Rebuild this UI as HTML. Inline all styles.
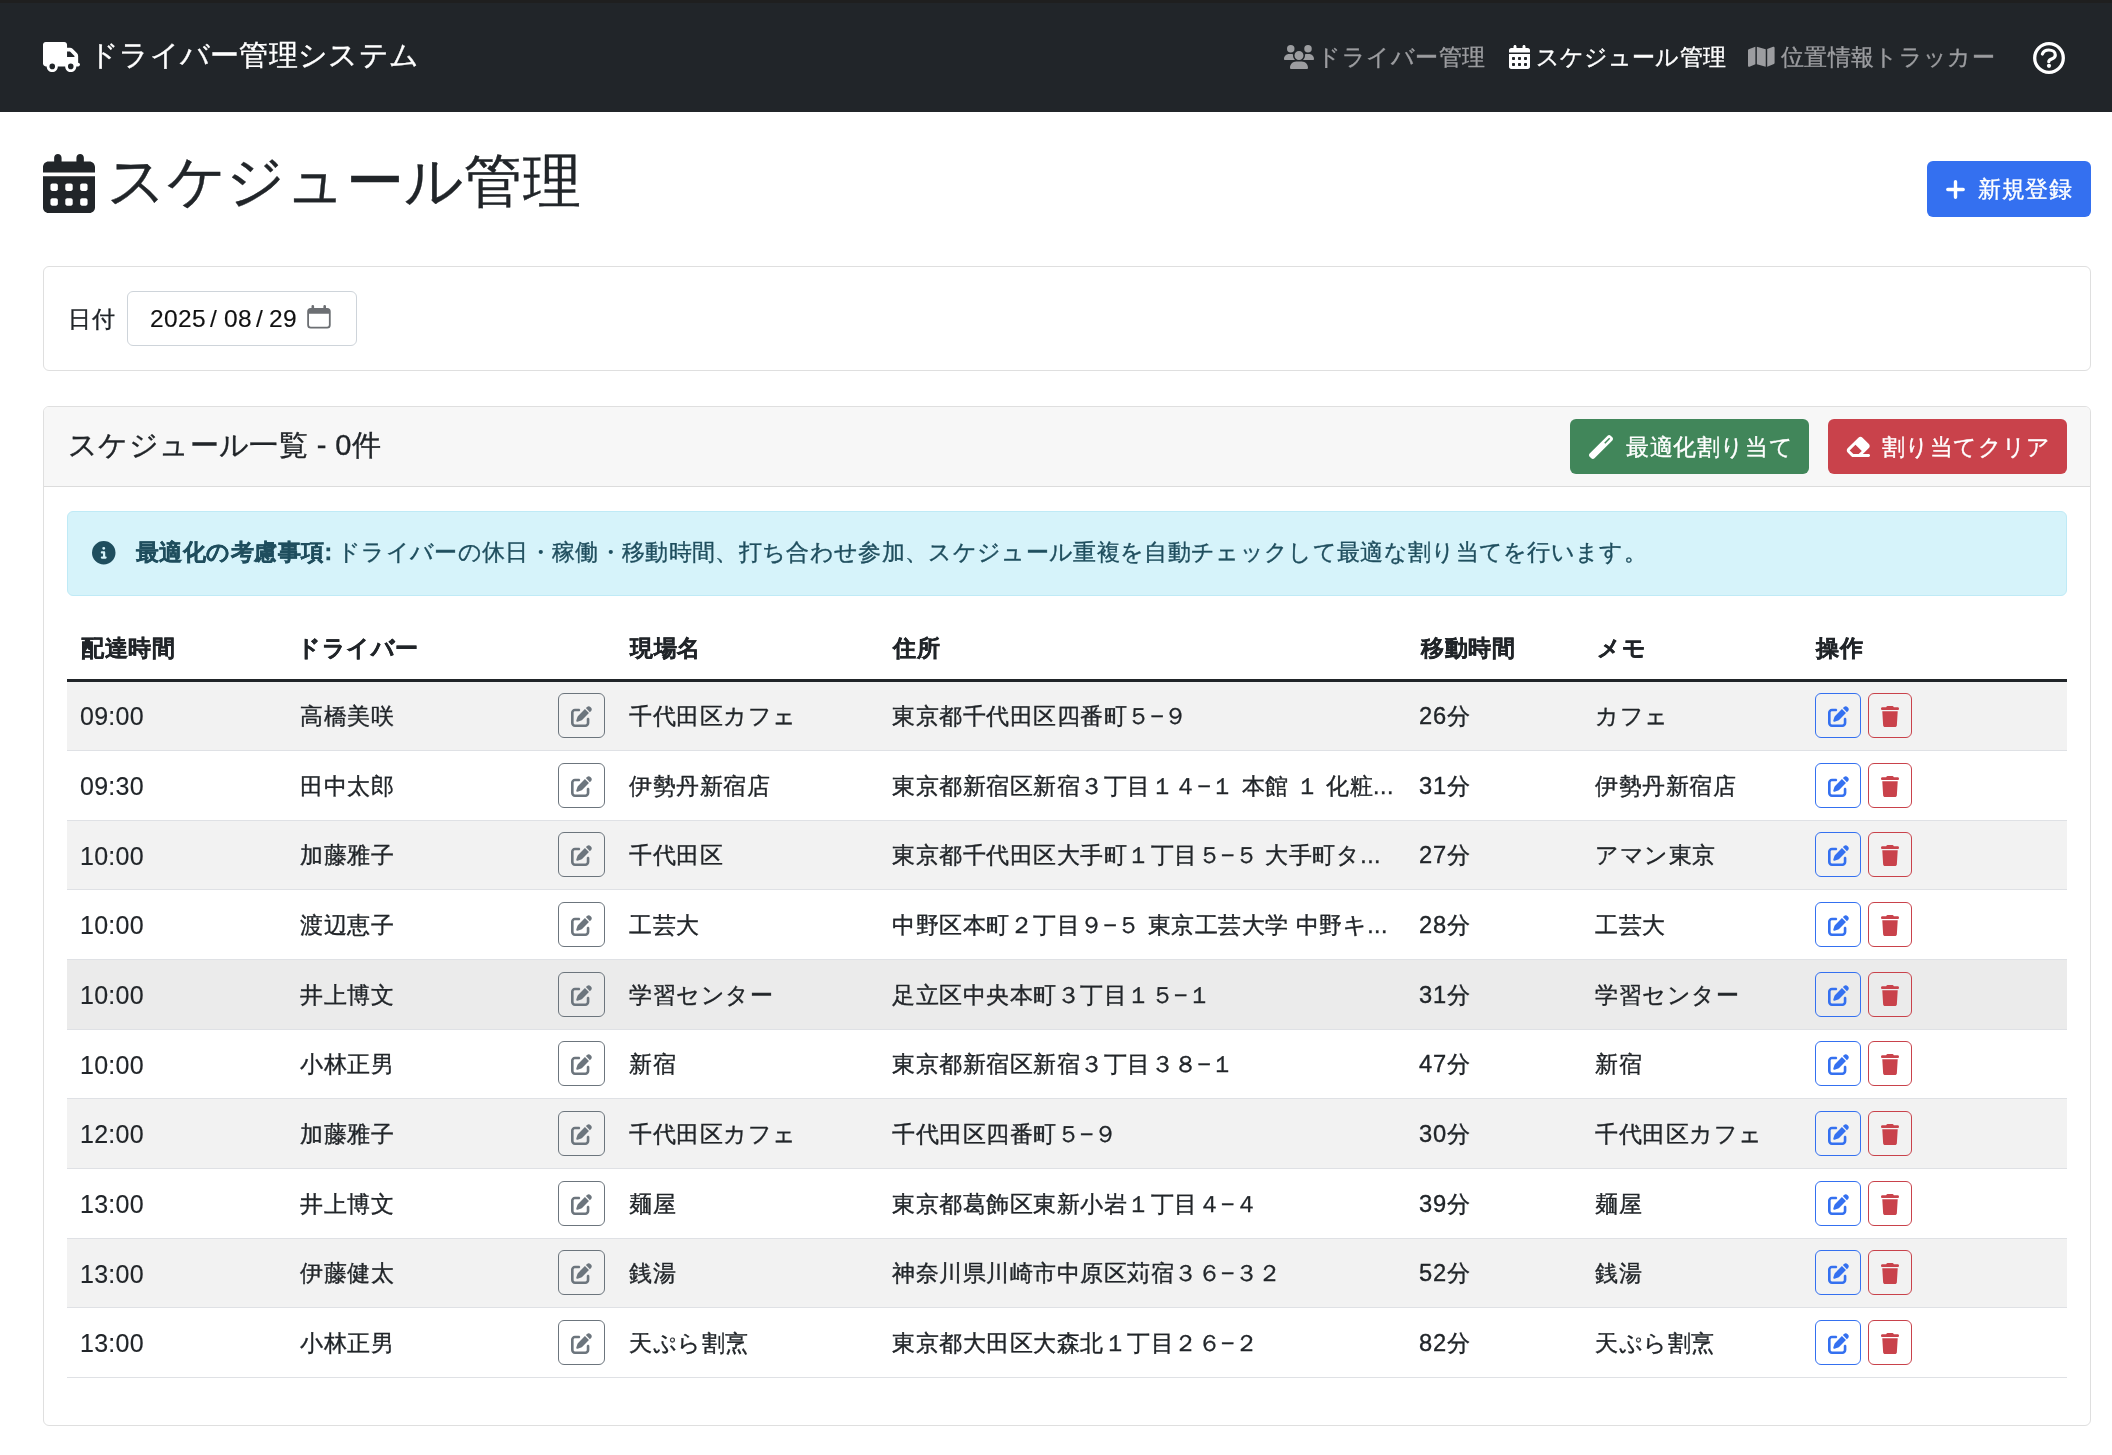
<!DOCTYPE html>
<html lang="ja">
<head>
<meta charset="utf-8">
<title>スケジュール管理</title>
<style>
html,body{margin:0;padding:0}
body{width:2112px;height:1455px;overflow:hidden;position:relative;background:#fff;font-family:"Liberation Sans",sans-serif;color:#212529;font-size:23.5px}
.a{position:absolute}
svg{display:block;overflow:visible}
.t{position:absolute;white-space:nowrap;line-height:1;-webkit-text-stroke:0.35px currentColor;will-change:transform}
.n{-webkit-text-stroke:0}
</style>
</head>
<body>
<div class="a" style="left:0px;top:0px;width:2112px;height:112px;box-sizing:border-box;background:#212529"></div>
<div class="a" style="left:0px;top:0px;width:2112px;height:3px;box-sizing:border-box;background:#1f1f1f"></div>
<svg class="a" style="left:43px;top:42px" width="37" height="30" viewBox="0 0 640 512" preserveAspectRatio="none"><path fill="#fff" d="M48 0C21.5 0 0 21.5 0 48V368c0 26.5 21.5 48 48 48H64c0 53 43 96 96 96s96-43 96-96H384c0 53 43 96 96 96s96-43 96-96h32c17.7 0 32-14.3 32-32s-14.3-32-32-32V288 256 237.3c0-17-6.7-33.3-18.7-45.3L512 114.7c-12-12-28.3-18.7-45.3-18.7H416V48c0-26.5-21.5-48-48-48H48zM416 160h50.7L544 237.3V256H416V160zM112 416a48 48 0 1 1 96 0 48 48 0 1 1 -96 0zm368-48a48 48 0 1 1 0 96 48 48 0 1 1 0-96z"/></svg>
<div class="t" style="left:89px;top:41px;font-size:29px;color:#fff;letter-spacing:0.3px">ドライバー管理システム</div>
<svg class="a" style="left:1284px;top:45px" width="30" height="24" viewBox="0 0 640 512" preserveAspectRatio="none"><path fill="#9c9da0" d="M144 0a80 80 0 1 1 0 160A80 80 0 1 1 144 0zM512 0a80 80 0 1 1 0 160A80 80 0 1 1 512 0zM0 298.7C0 239.8 47.8 192 106.7 192h42.7c15.9 0 31 3.5 44.6 9.7c-1.3 7.2-1.9 14.7-1.9 22.3c0 38.2 16.8 72.5 43.3 96c-.2 0-.4 0-.7 0H21.3C9.6 320 0 310.4 0 298.7zM405.3 320c-.2 0-.4 0-.7 0c26.6-23.5 43.3-57.8 43.3-96c0-7.6-.7-15-1.9-22.3c13.6-6.3 28.7-9.7 44.6-9.7h42.7C592.2 192 640 239.8 640 298.7c0 11.8-9.6 21.3-21.3 21.3H405.3zM224 224a96 96 0 1 1 192 0 96 96 0 1 1 -192 0zM128 485.3C128 411.7 187.7 352 261.3 352H378.7C452.3 352 512 411.7 512 485.3c0 14.7-11.9 26.7-26.7 26.7H154.7c-14.7 0-26.7-11.9-26.7-26.7z"/></svg>
<div class="t" style="left:1317px;top:45.5px;font-size:23px;color:#9c9da0;letter-spacing:0.5px">ドライバー管理</div>
<svg class="a" style="left:1509px;top:45px" width="21" height="24" viewBox="0 0 448 512" preserveAspectRatio="none"><path fill="#fff" d="M128 0c17.7 0 32 14.3 32 32V64H288V32c0-17.7 14.3-32 32-32s32 14.3 32 32V64h48c26.5 0 48 21.5 48 48v48H0V112C0 85.5 21.5 64 48 64H96V32c0-17.7 14.3-32 32-32zM0 192H448V464c0 26.5-21.5 48-48 48H48c-26.5 0-48-21.5-48-48V192zm80 64c-8.8 0-16 7.2-16 16v32c0 8.8 7.2 16 16 16h32c8.8 0 16-7.2 16-16V272c0-8.8-7.2-16-16-16H80zm128 0c-8.8 0-16 7.2-16 16v32c0 8.8 7.2 16 16 16h32c8.8 0 16-7.2 16-16V272c0-8.8-7.2-16-16-16H208zm112 16v32c0 8.8 7.2 16 16 16h32c8.8 0 16-7.2 16-16V272c0-8.8-7.2-16-16-16H336c-8.8 0-16 7.2-16 16zM80 384c-8.8 0-16 7.2-16 16v32c0 8.8 7.2 16 16 16h32c8.8 0 16-7.2 16-16V400c0-8.8-7.2-16-16-16H80zm112 16v32c0 8.8 7.2 16 16 16h32c8.8 0 16-7.2 16-16V400c0-8.8-7.2-16-16-16H208c-8.8 0-16 7.2-16 16zm144-16c-8.8 0-16 7.2-16 16v32c0 8.8 7.2 16 16 16h32c8.8 0 16-7.2 16-16V400c0-8.8-7.2-16-16-16H336z"/></svg>
<div class="t" style="left:1536px;top:46px;font-size:23px;color:#fff;letter-spacing:0.1px">スケジュール管理</div>
<svg class="a" style="left:1748px;top:45.4px" width="26.6" height="23.4" viewBox="0 0 576 512" preserveAspectRatio="none"><path fill="#9c9da0" d="M384 476.1L192 421.2V35.9L384 90.8V476.1zm32-1.2V88.4L543.1 37.5c15.8-6.3 32.9 5.3 32.9 22.3V394.6c0 9.8-6 18.6-15.1 22.3L416 474.8zM15.1 95.1L160 37.2V423.6L32.9 474.5C17.1 480.8 0 469.2 0 452.2V117.4c0-9.8 6-18.6 15.1-22.3z"/></svg>
<div class="t" style="left:1781px;top:45.5px;font-size:23px;color:#9c9da0;letter-spacing:0.35px">位置情報トラッカー</div>
<svg class="a" style="left:2033px;top:42px" width="32" height="32" viewBox="0 0 32 32"><circle cx="16" cy="16" r="14.3" fill="none" stroke="#fff" stroke-width="3.3"/><path d="M9.4 12C10.3 9.4 12.8 8 15.8 8C19.4 8 22.3 10.1 22.3 12.9C22.3 15.2 20.7 16.2 18.6 17C16.9 17.7 15.8 18.4 15.8 19.6V19.7" fill="none" stroke="#fff" stroke-width="3.2" stroke-linecap="round"/><circle cx="16" cy="23.8" r="2.1" fill="#fff"/></svg>
<svg class="a" style="left:43px;top:154px" width="52" height="59" viewBox="0 0 448 512" preserveAspectRatio="none"><path fill="#212529" d="M128 0c17.7 0 32 14.3 32 32V64H288V32c0-17.7 14.3-32 32-32s32 14.3 32 32V64h48c26.5 0 48 21.5 48 48v48H0V112C0 85.5 21.5 64 48 64H96V32c0-17.7 14.3-32 32-32zM0 192H448V464c0 26.5-21.5 48-48 48H48c-26.5 0-48-21.5-48-48V192zm80 64c-8.8 0-16 7.2-16 16v32c0 8.8 7.2 16 16 16h32c8.8 0 16-7.2 16-16V272c0-8.8-7.2-16-16-16H80zm128 0c-8.8 0-16 7.2-16 16v32c0 8.8 7.2 16 16 16h32c8.8 0 16-7.2 16-16V272c0-8.8-7.2-16-16-16H208zm112 16v32c0 8.8 7.2 16 16 16h32c8.8 0 16-7.2 16-16V272c0-8.8-7.2-16-16-16H336c-8.8 0-16 7.2-16 16zM80 384c-8.8 0-16 7.2-16 16v32c0 8.8 7.2 16 16 16h32c8.8 0 16-7.2 16-16V400c0-8.8-7.2-16-16-16H80zm112 16v32c0 8.8 7.2 16 16 16h32c8.8 0 16-7.2 16-16V400c0-8.8-7.2-16-16-16H208c-8.8 0-16 7.2-16 16zm144-16c-8.8 0-16 7.2-16 16v32c0 8.8 7.2 16 16 16h32c8.8 0 16-7.2 16-16V400c0-8.8-7.2-16-16-16H336z"/></svg>
<div class="t" style="left:107px;top:152px;font-size:58px;color:#212529;letter-spacing:0.65px">スケジュール管理</div>
<div class="a" style="left:1927px;top:161px;width:164px;height:56px;box-sizing:border-box;background:#3470f0;border-radius:6px"></div>
<svg class="a" style="left:1946px;top:180px" width="19" height="19" viewBox="0 0 19 19"><path d="M9.5 1.8v15.4M1.8 9.5h15.4" stroke="#fff" stroke-width="3.4" stroke-linecap="round"/></svg>
<div class="t" style="left:1978px;top:178px;font-size:23px;color:#fff;letter-spacing:0.5px">新規登録</div>
<div class="a" style="left:43px;top:266px;width:2048px;height:105px;box-sizing:border-box;border:1px solid #dfdfdf;border-radius:6px;background:#fff"></div>
<div class="t" style="left:68px;top:307.5px;font-size:23px;letter-spacing:0.5px">日付</div>
<div class="a" style="left:127px;top:291px;width:230px;height:55px;box-sizing:border-box;border:1px solid #ced4da;border-radius:6px;background:#fff"></div>
<div class="t" style="left:150px;top:307.2px;font-size:24.5px;color:#111;letter-spacing:0.4px;-webkit-text-stroke:0.15px">2025</div>
<div class="t" style="left:210px;top:307.2px;font-size:24.5px;color:#111;-webkit-text-stroke:0.15px">/</div>
<div class="t" style="left:223.5px;top:307.2px;font-size:24.5px;color:#111;letter-spacing:0.4px;-webkit-text-stroke:0.15px">08</div>
<div class="t" style="left:255.5px;top:307.2px;font-size:24.5px;color:#111;-webkit-text-stroke:0.15px">/</div>
<div class="t" style="left:269px;top:307.2px;font-size:24.5px;color:#111;letter-spacing:0.4px;-webkit-text-stroke:0.15px">29</div>
<svg class="a" style="left:307px;top:305px" width="24" height="24" viewBox="0 0 24 24"><path fill="#6c6f73" fill-rule="evenodd" d="M3.7 3H20.2A3.5 3.5 0 0 1 23.7 6.5V20A3.5 3.5 0 0 1 20.2 23.5H3.7A3.5 3.5 0 0 1 0.2 20V6.5A3.5 3.5 0 0 1 3.7 3ZM2 8.7V20A1.7 1.7 0 0 0 3.7 21.7H20.2A1.7 1.7 0 0 0 21.9 20V8.7Z"/><path fill="#6c6f73" d="M4.5 3.5V1.3A1.3 1.3 0 0 1 7.1 1.3V3.5ZM16.4 3.5V1.3A1.3 1.3 0 0 1 19 1.3V3.5Z"/></svg>
<div class="a" style="left:43px;top:406px;width:2048px;height:1020px;box-sizing:border-box;border:1px solid #dfdfdf;border-radius:6px;background:#fff;overflow:hidden"></div>
<div class="a" style="left:44px;top:407px;width:2046px;height:80px;box-sizing:border-box;background:#f7f7f7;border-bottom:1px solid #dcdcdc;border-radius:5px 5px 0 0"></div>
<div class="t" style="left:68px;top:431px;font-size:29px;color:#212529;letter-spacing:0.4px">スケジュール一覧 - 0件</div>
<div class="a" style="left:1570px;top:419px;width:239px;height:55px;box-sizing:border-box;background:#41865a;border-radius:6px"></div>
<svg class="a" style="left:1589px;top:435px" width="24" height="24" viewBox="0 0 512 512"><path fill="#fff" fill-rule="evenodd" d="M14.1 463.3c-18.7-18.7-18.7-49.1 0-67.9L395.4 14.1c18.7-18.7 49.1-18.7 67.9 0l34.6 34.6c18.7 18.7 18.7 49.1 0 67.9L116.5 497.9c-18.7 18.7-49.1 18.7-67.9 0L14.1 463.3zM347.6 187.6l105-105L429.4 59.3l-105 105 23.3 23.3z"/></svg>
<div class="t" style="left:1625.5px;top:435.5px;font-size:23px;color:#fff;letter-spacing:0.6px">最適化割り当て</div>
<div class="a" style="left:1828px;top:419px;width:239px;height:55px;box-sizing:border-box;background:#c9424b;border-radius:6px"></div>
<svg class="a" style="left:1845.2px;top:435px" width="26.5" height="23.5" viewBox="0 0 576 512" preserveAspectRatio="none"><path fill="#fff" d="M290.7 57.4L57.4 290.7c-25 25-25 65.5 0 90.5l80 80c12 12 28.3 18.7 45.3 18.7H288h9.4H512c17.7 0 32-14.3 32-32s-14.3-32-32-32H387.9L518.6 285.3c25-25 25-65.5 0-90.5L381.3 57.4c-25-25-65.5-25-90.5 0zM297.4 416H288l-105.4 0-80-80L227.3 211.3 364.7 348.7 297.4 416z"/></svg>
<div class="t" style="left:1882px;top:435.5px;font-size:23px;color:#fff;letter-spacing:0.4px">割り当てクリア</div>
<div class="a" style="left:67px;top:511px;width:2000px;height:85px;box-sizing:border-box;background:#d6f3fa;border:1px solid #bfeaf6;border-radius:6px"></div>
<svg class="a" style="left:92px;top:541px" width="23.5" height="23.5" viewBox="0 0 512 512" preserveAspectRatio="none"><path fill="#1f4e5e" d="M256 512A256 256 0 1 0 256 0a256 256 0 1 0 0 512zM216 336h24V272H216c-13.3 0-24-10.7-24-24s10.7-24 24-24h48c13.3 0 24 10.7 24 24v88h8c13.3 0 24 10.7 24 24s-10.7 24-24 24H216c-13.3 0-24-10.7-24-24s10.7-24 24-24zm40-208a32 32 0 1 1 0 64 32 32 0 1 1 0-64z"/></svg>
<div class="t" style="left:136px;top:540.7px;font-size:23px;color:#1f4e5e;letter-spacing:0.45px"><b>最適化の考慮事項:</b></div>
<div class="t" style="left:337px;top:540.7px;font-size:23px;color:#1f4e5e;letter-spacing:0.33px">ドライバーの休日・稼働・移動時間、打ち合わせ参加、スケジュール重複を自動チェックして最適な割り当てを行います。</div>
<div class="t" style="left:80.5px;top:637.4px;font-size:23px;color:#212529;font-weight:bold;letter-spacing:0.5px">配達時間</div>
<div class="t" style="left:297.2px;top:637.4px;font-size:23px;color:#212529;font-weight:bold;letter-spacing:0.5px">ドライバー</div>
<div class="t" style="left:629.5px;top:637.4px;font-size:23px;color:#212529;font-weight:bold;letter-spacing:0.5px">現場名</div>
<div class="t" style="left:892.5px;top:637.4px;font-size:23px;color:#212529;font-weight:bold;letter-spacing:0.5px">住所</div>
<div class="t" style="left:1420.5px;top:637.4px;font-size:23px;color:#212529;font-weight:bold;letter-spacing:0.5px">移動時間</div>
<div class="t" style="left:1596.5px;top:637.4px;font-size:23px;color:#212529;font-weight:bold;letter-spacing:0.5px">メモ</div>
<div class="t" style="left:1815.5px;top:637.4px;font-size:23px;color:#212529;font-weight:bold;letter-spacing:0.5px">操作</div>
<div class="a" style="left:67px;top:681.33px;width:2000px;height:69.67px;box-sizing:border-box;background:#f2f2f2;border-bottom:1px solid #dfe1e5"></div>
<div class="t" style="left:79.5px;top:704.33px;font-size:25px;color:#212529;letter-spacing:0.25px;-webkit-text-stroke:0.15px">09:00</div>
<div class="t" style="left:299.5px;top:704.83px;font-size:23px;color:#212529;letter-spacing:0.5px">高橋美咲</div>
<div class="t" style="left:629px;top:704.83px;font-size:23px;color:#212529;letter-spacing:0.5px">千代田区カフェ</div>
<div class="t" style="left:892px;top:704.83px;font-size:23px;color:#212529;letter-spacing:0.5px">東京都千代田区四番町５−９</div>
<div class="t" style="left:1419px;top:704.83px;font-size:23px;color:#212529;letter-spacing:0.5px"><span style="font-size:23.7px;letter-spacing:0.9px">26</span>分</div>
<div class="t" style="left:1595px;top:704.83px;font-size:23px;color:#212529;letter-spacing:0.5px">カフェ</div>
<div class="a" style="left:558px;top:693.0px;width:47px;height:45px;box-sizing:border-box;border:1px solid #6c757d;border-radius:6px"></div>
<svg class="a" style="left:571px;top:706.0px" width="21" height="21" viewBox="0 0 512 512" preserveAspectRatio="none"><path fill="#6c757d" d="M471.6 21.7c-21.9-21.9-57.3-21.9-79.2 0L362.3 51.7l97.9 97.9 30.1-30.1c21.9-21.9 21.9-57.3 0-79.2L471.6 21.7zm-299.2 220c-6.1 6.1-10.8 13.6-13.5 21.9l-29.6 88.8c-2.9 8.6-.6 18.1 5.8 24.6s15.9 8.7 24.6 5.8l88.8-29.6c8.2-2.7 15.7-7.4 21.9-13.5L437.7 172.3 339.7 74.3 172.4 241.7zM96 64C43 64 0 107 0 160V416c0 53 43 96 96 96H352c53 0 96-43 96-96V320c0-17.7-14.3-32-32-32s-32 14.3-32 32v96c0 17.7-14.3 32-32 32H96c-17.7 0-32-14.3-32-32V160c0-17.7 14.3-32 32-32h96c17.7 0 32-14.3 32-32s-14.3-32-32-32H96z"/></svg>
<div class="a" style="left:1815px;top:693.0px;width:46px;height:45px;box-sizing:border-box;border:1px solid #3470f0;border-radius:6px"></div>
<svg class="a" style="left:1828px;top:706.0px" width="21" height="21" viewBox="0 0 512 512" preserveAspectRatio="none"><path fill="#3470f0" d="M471.6 21.7c-21.9-21.9-57.3-21.9-79.2 0L362.3 51.7l97.9 97.9 30.1-30.1c21.9-21.9 21.9-57.3 0-79.2L471.6 21.7zm-299.2 220c-6.1 6.1-10.8 13.6-13.5 21.9l-29.6 88.8c-2.9 8.6-.6 18.1 5.8 24.6s15.9 8.7 24.6 5.8l88.8-29.6c8.2-2.7 15.7-7.4 21.9-13.5L437.7 172.3 339.7 74.3 172.4 241.7zM96 64C43 64 0 107 0 160V416c0 53 43 96 96 96H352c53 0 96-43 96-96V320c0-17.7-14.3-32-32-32s-32 14.3-32 32v96c0 17.7-14.3 32-32 32H96c-17.7 0-32-14.3-32-32V160c0-17.7 14.3-32 32-32h96c17.7 0 32-14.3 32-32s-14.3-32-32-32H96z"/></svg>
<div class="a" style="left:1868px;top:693.0px;width:44px;height:45px;box-sizing:border-box;border:1px solid #c9424b;border-radius:6px"></div>
<svg class="a" style="left:1881px;top:706.0px" width="18" height="21" viewBox="0 0 448 512" preserveAspectRatio="none"><path fill="#c9424b" d="M135.2 17.7L128 32H32C14.3 32 0 46.3 0 64S14.3 96 32 96H416c17.7 0 32-14.3 32-32s-14.3-32-32-32H320l-7.2-14.3C307.4 6.8 296.3 0 284.2 0H163.8c-12.1 0-23.2 6.8-28.6 17.7zM416 128H32L53.2 467c1.6 25.3 22.6 45 47.9 45H346.9c25.3 0 46.3-19.7 47.9-45L416 128z"/></svg>
<div class="a" style="left:67px;top:751.0px;width:2000px;height:69.67px;box-sizing:border-box;background:#fff;border-bottom:1px solid #dfe1e5"></div>
<div class="t" style="left:79.5px;top:774.0px;font-size:25px;color:#212529;letter-spacing:0.25px;-webkit-text-stroke:0.15px">09:30</div>
<div class="t" style="left:299.5px;top:774.5px;font-size:23px;color:#212529;letter-spacing:0.5px">田中太郎</div>
<div class="t" style="left:629px;top:774.5px;font-size:23px;color:#212529;letter-spacing:0.5px">伊勢丹新宿店</div>
<div class="t" style="left:892px;top:774.5px;font-size:23px;color:#212529;letter-spacing:0.5px">東京都新宿区新宿３丁目１４−１ 本館 １ 化粧<span class="el">...</span></div>
<div class="t" style="left:1419px;top:774.5px;font-size:23px;color:#212529;letter-spacing:0.5px"><span style="font-size:23.7px;letter-spacing:0.9px">31</span>分</div>
<div class="t" style="left:1595px;top:774.5px;font-size:23px;color:#212529;letter-spacing:0.5px">伊勢丹新宿店</div>
<div class="a" style="left:558px;top:762.67px;width:47px;height:45px;box-sizing:border-box;border:1px solid #6c757d;border-radius:6px"></div>
<svg class="a" style="left:571px;top:775.67px" width="21" height="21" viewBox="0 0 512 512" preserveAspectRatio="none"><path fill="#6c757d" d="M471.6 21.7c-21.9-21.9-57.3-21.9-79.2 0L362.3 51.7l97.9 97.9 30.1-30.1c21.9-21.9 21.9-57.3 0-79.2L471.6 21.7zm-299.2 220c-6.1 6.1-10.8 13.6-13.5 21.9l-29.6 88.8c-2.9 8.6-.6 18.1 5.8 24.6s15.9 8.7 24.6 5.8l88.8-29.6c8.2-2.7 15.7-7.4 21.9-13.5L437.7 172.3 339.7 74.3 172.4 241.7zM96 64C43 64 0 107 0 160V416c0 53 43 96 96 96H352c53 0 96-43 96-96V320c0-17.7-14.3-32-32-32s-32 14.3-32 32v96c0 17.7-14.3 32-32 32H96c-17.7 0-32-14.3-32-32V160c0-17.7 14.3-32 32-32h96c17.7 0 32-14.3 32-32s-14.3-32-32-32H96z"/></svg>
<div class="a" style="left:1815px;top:762.67px;width:46px;height:45px;box-sizing:border-box;border:1px solid #3470f0;border-radius:6px"></div>
<svg class="a" style="left:1828px;top:775.67px" width="21" height="21" viewBox="0 0 512 512" preserveAspectRatio="none"><path fill="#3470f0" d="M471.6 21.7c-21.9-21.9-57.3-21.9-79.2 0L362.3 51.7l97.9 97.9 30.1-30.1c21.9-21.9 21.9-57.3 0-79.2L471.6 21.7zm-299.2 220c-6.1 6.1-10.8 13.6-13.5 21.9l-29.6 88.8c-2.9 8.6-.6 18.1 5.8 24.6s15.9 8.7 24.6 5.8l88.8-29.6c8.2-2.7 15.7-7.4 21.9-13.5L437.7 172.3 339.7 74.3 172.4 241.7zM96 64C43 64 0 107 0 160V416c0 53 43 96 96 96H352c53 0 96-43 96-96V320c0-17.7-14.3-32-32-32s-32 14.3-32 32v96c0 17.7-14.3 32-32 32H96c-17.7 0-32-14.3-32-32V160c0-17.7 14.3-32 32-32h96c17.7 0 32-14.3 32-32s-14.3-32-32-32H96z"/></svg>
<div class="a" style="left:1868px;top:762.67px;width:44px;height:45px;box-sizing:border-box;border:1px solid #c9424b;border-radius:6px"></div>
<svg class="a" style="left:1881px;top:775.67px" width="18" height="21" viewBox="0 0 448 512" preserveAspectRatio="none"><path fill="#c9424b" d="M135.2 17.7L128 32H32C14.3 32 0 46.3 0 64S14.3 96 32 96H416c17.7 0 32-14.3 32-32s-14.3-32-32-32H320l-7.2-14.3C307.4 6.8 296.3 0 284.2 0H163.8c-12.1 0-23.2 6.8-28.6 17.7zM416 128H32L53.2 467c1.6 25.3 22.6 45 47.9 45H346.9c25.3 0 46.3-19.7 47.9-45L416 128z"/></svg>
<div class="a" style="left:67px;top:820.67px;width:2000px;height:69.67px;box-sizing:border-box;background:#f2f2f2;border-bottom:1px solid #dfe1e5"></div>
<div class="t" style="left:79.5px;top:843.67px;font-size:25px;color:#212529;letter-spacing:0.25px;-webkit-text-stroke:0.15px">10:00</div>
<div class="t" style="left:299.5px;top:844.17px;font-size:23px;color:#212529;letter-spacing:0.5px">加藤雅子</div>
<div class="t" style="left:629px;top:844.17px;font-size:23px;color:#212529;letter-spacing:0.5px">千代田区</div>
<div class="t" style="left:892px;top:844.17px;font-size:23px;color:#212529;letter-spacing:0.5px">東京都千代田区大手町１丁目５−５ 大手町タ<span class="el">...</span></div>
<div class="t" style="left:1419px;top:844.17px;font-size:23px;color:#212529;letter-spacing:0.5px"><span style="font-size:23.7px;letter-spacing:0.9px">27</span>分</div>
<div class="t" style="left:1595px;top:844.17px;font-size:23px;color:#212529;letter-spacing:0.5px">アマン東京</div>
<div class="a" style="left:558px;top:832.34px;width:47px;height:45px;box-sizing:border-box;border:1px solid #6c757d;border-radius:6px"></div>
<svg class="a" style="left:571px;top:845.34px" width="21" height="21" viewBox="0 0 512 512" preserveAspectRatio="none"><path fill="#6c757d" d="M471.6 21.7c-21.9-21.9-57.3-21.9-79.2 0L362.3 51.7l97.9 97.9 30.1-30.1c21.9-21.9 21.9-57.3 0-79.2L471.6 21.7zm-299.2 220c-6.1 6.1-10.8 13.6-13.5 21.9l-29.6 88.8c-2.9 8.6-.6 18.1 5.8 24.6s15.9 8.7 24.6 5.8l88.8-29.6c8.2-2.7 15.7-7.4 21.9-13.5L437.7 172.3 339.7 74.3 172.4 241.7zM96 64C43 64 0 107 0 160V416c0 53 43 96 96 96H352c53 0 96-43 96-96V320c0-17.7-14.3-32-32-32s-32 14.3-32 32v96c0 17.7-14.3 32-32 32H96c-17.7 0-32-14.3-32-32V160c0-17.7 14.3-32 32-32h96c17.7 0 32-14.3 32-32s-14.3-32-32-32H96z"/></svg>
<div class="a" style="left:1815px;top:832.34px;width:46px;height:45px;box-sizing:border-box;border:1px solid #3470f0;border-radius:6px"></div>
<svg class="a" style="left:1828px;top:845.34px" width="21" height="21" viewBox="0 0 512 512" preserveAspectRatio="none"><path fill="#3470f0" d="M471.6 21.7c-21.9-21.9-57.3-21.9-79.2 0L362.3 51.7l97.9 97.9 30.1-30.1c21.9-21.9 21.9-57.3 0-79.2L471.6 21.7zm-299.2 220c-6.1 6.1-10.8 13.6-13.5 21.9l-29.6 88.8c-2.9 8.6-.6 18.1 5.8 24.6s15.9 8.7 24.6 5.8l88.8-29.6c8.2-2.7 15.7-7.4 21.9-13.5L437.7 172.3 339.7 74.3 172.4 241.7zM96 64C43 64 0 107 0 160V416c0 53 43 96 96 96H352c53 0 96-43 96-96V320c0-17.7-14.3-32-32-32s-32 14.3-32 32v96c0 17.7-14.3 32-32 32H96c-17.7 0-32-14.3-32-32V160c0-17.7 14.3-32 32-32h96c17.7 0 32-14.3 32-32s-14.3-32-32-32H96z"/></svg>
<div class="a" style="left:1868px;top:832.34px;width:44px;height:45px;box-sizing:border-box;border:1px solid #c9424b;border-radius:6px"></div>
<svg class="a" style="left:1881px;top:845.34px" width="18" height="21" viewBox="0 0 448 512" preserveAspectRatio="none"><path fill="#c9424b" d="M135.2 17.7L128 32H32C14.3 32 0 46.3 0 64S14.3 96 32 96H416c17.7 0 32-14.3 32-32s-14.3-32-32-32H320l-7.2-14.3C307.4 6.8 296.3 0 284.2 0H163.8c-12.1 0-23.2 6.8-28.6 17.7zM416 128H32L53.2 467c1.6 25.3 22.6 45 47.9 45H346.9c25.3 0 46.3-19.7 47.9-45L416 128z"/></svg>
<div class="a" style="left:67px;top:890.34px;width:2000px;height:69.67px;box-sizing:border-box;background:#fff;border-bottom:1px solid #dfe1e5"></div>
<div class="t" style="left:79.5px;top:913.34px;font-size:25px;color:#212529;letter-spacing:0.25px;-webkit-text-stroke:0.15px">10:00</div>
<div class="t" style="left:299.5px;top:913.84px;font-size:23px;color:#212529;letter-spacing:0.5px">渡辺恵子</div>
<div class="t" style="left:629px;top:913.84px;font-size:23px;color:#212529;letter-spacing:0.5px">工芸大</div>
<div class="t" style="left:892px;top:913.84px;font-size:23px;color:#212529;letter-spacing:0.5px">中野区本町２丁目９−５ 東京工芸大学 中野キ<span class="el">...</span></div>
<div class="t" style="left:1419px;top:913.84px;font-size:23px;color:#212529;letter-spacing:0.5px"><span style="font-size:23.7px;letter-spacing:0.9px">28</span>分</div>
<div class="t" style="left:1595px;top:913.84px;font-size:23px;color:#212529;letter-spacing:0.5px">工芸大</div>
<div class="a" style="left:558px;top:902.01px;width:47px;height:45px;box-sizing:border-box;border:1px solid #6c757d;border-radius:6px"></div>
<svg class="a" style="left:571px;top:915.01px" width="21" height="21" viewBox="0 0 512 512" preserveAspectRatio="none"><path fill="#6c757d" d="M471.6 21.7c-21.9-21.9-57.3-21.9-79.2 0L362.3 51.7l97.9 97.9 30.1-30.1c21.9-21.9 21.9-57.3 0-79.2L471.6 21.7zm-299.2 220c-6.1 6.1-10.8 13.6-13.5 21.9l-29.6 88.8c-2.9 8.6-.6 18.1 5.8 24.6s15.9 8.7 24.6 5.8l88.8-29.6c8.2-2.7 15.7-7.4 21.9-13.5L437.7 172.3 339.7 74.3 172.4 241.7zM96 64C43 64 0 107 0 160V416c0 53 43 96 96 96H352c53 0 96-43 96-96V320c0-17.7-14.3-32-32-32s-32 14.3-32 32v96c0 17.7-14.3 32-32 32H96c-17.7 0-32-14.3-32-32V160c0-17.7 14.3-32 32-32h96c17.7 0 32-14.3 32-32s-14.3-32-32-32H96z"/></svg>
<div class="a" style="left:1815px;top:902.01px;width:46px;height:45px;box-sizing:border-box;border:1px solid #3470f0;border-radius:6px"></div>
<svg class="a" style="left:1828px;top:915.01px" width="21" height="21" viewBox="0 0 512 512" preserveAspectRatio="none"><path fill="#3470f0" d="M471.6 21.7c-21.9-21.9-57.3-21.9-79.2 0L362.3 51.7l97.9 97.9 30.1-30.1c21.9-21.9 21.9-57.3 0-79.2L471.6 21.7zm-299.2 220c-6.1 6.1-10.8 13.6-13.5 21.9l-29.6 88.8c-2.9 8.6-.6 18.1 5.8 24.6s15.9 8.7 24.6 5.8l88.8-29.6c8.2-2.7 15.7-7.4 21.9-13.5L437.7 172.3 339.7 74.3 172.4 241.7zM96 64C43 64 0 107 0 160V416c0 53 43 96 96 96H352c53 0 96-43 96-96V320c0-17.7-14.3-32-32-32s-32 14.3-32 32v96c0 17.7-14.3 32-32 32H96c-17.7 0-32-14.3-32-32V160c0-17.7 14.3-32 32-32h96c17.7 0 32-14.3 32-32s-14.3-32-32-32H96z"/></svg>
<div class="a" style="left:1868px;top:902.01px;width:44px;height:45px;box-sizing:border-box;border:1px solid #c9424b;border-radius:6px"></div>
<svg class="a" style="left:1881px;top:915.01px" width="18" height="21" viewBox="0 0 448 512" preserveAspectRatio="none"><path fill="#c9424b" d="M135.2 17.7L128 32H32C14.3 32 0 46.3 0 64S14.3 96 32 96H416c17.7 0 32-14.3 32-32s-14.3-32-32-32H320l-7.2-14.3C307.4 6.8 296.3 0 284.2 0H163.8c-12.1 0-23.2 6.8-28.6 17.7zM416 128H32L53.2 467c1.6 25.3 22.6 45 47.9 45H346.9c25.3 0 46.3-19.7 47.9-45L416 128z"/></svg>
<div class="a" style="left:67px;top:960.01px;width:2000px;height:69.67px;box-sizing:border-box;background:#ebebeb;border-bottom:1px solid #dfe1e5"></div>
<div class="t" style="left:79.5px;top:983.01px;font-size:25px;color:#212529;letter-spacing:0.25px;-webkit-text-stroke:0.15px">10:00</div>
<div class="t" style="left:299.5px;top:983.51px;font-size:23px;color:#212529;letter-spacing:0.5px">井上博文</div>
<div class="t" style="left:629px;top:983.51px;font-size:23px;color:#212529;letter-spacing:0.5px">学習センター</div>
<div class="t" style="left:892px;top:983.51px;font-size:23px;color:#212529;letter-spacing:0.5px">足立区中央本町３丁目１５−１</div>
<div class="t" style="left:1419px;top:983.51px;font-size:23px;color:#212529;letter-spacing:0.5px"><span style="font-size:23.7px;letter-spacing:0.9px">31</span>分</div>
<div class="t" style="left:1595px;top:983.51px;font-size:23px;color:#212529;letter-spacing:0.5px">学習センター</div>
<div class="a" style="left:558px;top:971.68px;width:47px;height:45px;box-sizing:border-box;border:1px solid #6c757d;border-radius:6px"></div>
<svg class="a" style="left:571px;top:984.68px" width="21" height="21" viewBox="0 0 512 512" preserveAspectRatio="none"><path fill="#6c757d" d="M471.6 21.7c-21.9-21.9-57.3-21.9-79.2 0L362.3 51.7l97.9 97.9 30.1-30.1c21.9-21.9 21.9-57.3 0-79.2L471.6 21.7zm-299.2 220c-6.1 6.1-10.8 13.6-13.5 21.9l-29.6 88.8c-2.9 8.6-.6 18.1 5.8 24.6s15.9 8.7 24.6 5.8l88.8-29.6c8.2-2.7 15.7-7.4 21.9-13.5L437.7 172.3 339.7 74.3 172.4 241.7zM96 64C43 64 0 107 0 160V416c0 53 43 96 96 96H352c53 0 96-43 96-96V320c0-17.7-14.3-32-32-32s-32 14.3-32 32v96c0 17.7-14.3 32-32 32H96c-17.7 0-32-14.3-32-32V160c0-17.7 14.3-32 32-32h96c17.7 0 32-14.3 32-32s-14.3-32-32-32H96z"/></svg>
<div class="a" style="left:1815px;top:971.68px;width:46px;height:45px;box-sizing:border-box;border:1px solid #3470f0;border-radius:6px"></div>
<svg class="a" style="left:1828px;top:984.68px" width="21" height="21" viewBox="0 0 512 512" preserveAspectRatio="none"><path fill="#3470f0" d="M471.6 21.7c-21.9-21.9-57.3-21.9-79.2 0L362.3 51.7l97.9 97.9 30.1-30.1c21.9-21.9 21.9-57.3 0-79.2L471.6 21.7zm-299.2 220c-6.1 6.1-10.8 13.6-13.5 21.9l-29.6 88.8c-2.9 8.6-.6 18.1 5.8 24.6s15.9 8.7 24.6 5.8l88.8-29.6c8.2-2.7 15.7-7.4 21.9-13.5L437.7 172.3 339.7 74.3 172.4 241.7zM96 64C43 64 0 107 0 160V416c0 53 43 96 96 96H352c53 0 96-43 96-96V320c0-17.7-14.3-32-32-32s-32 14.3-32 32v96c0 17.7-14.3 32-32 32H96c-17.7 0-32-14.3-32-32V160c0-17.7 14.3-32 32-32h96c17.7 0 32-14.3 32-32s-14.3-32-32-32H96z"/></svg>
<div class="a" style="left:1868px;top:971.68px;width:44px;height:45px;box-sizing:border-box;border:1px solid #c9424b;border-radius:6px"></div>
<svg class="a" style="left:1881px;top:984.68px" width="18" height="21" viewBox="0 0 448 512" preserveAspectRatio="none"><path fill="#c9424b" d="M135.2 17.7L128 32H32C14.3 32 0 46.3 0 64S14.3 96 32 96H416c17.7 0 32-14.3 32-32s-14.3-32-32-32H320l-7.2-14.3C307.4 6.8 296.3 0 284.2 0H163.8c-12.1 0-23.2 6.8-28.6 17.7zM416 128H32L53.2 467c1.6 25.3 22.6 45 47.9 45H346.9c25.3 0 46.3-19.7 47.9-45L416 128z"/></svg>
<div class="a" style="left:67px;top:1029.68px;width:2000px;height:69.67px;box-sizing:border-box;background:#fff;border-bottom:1px solid #dfe1e5"></div>
<div class="t" style="left:79.5px;top:1052.68px;font-size:25px;color:#212529;letter-spacing:0.25px;-webkit-text-stroke:0.15px">10:00</div>
<div class="t" style="left:299.5px;top:1053.18px;font-size:23px;color:#212529;letter-spacing:0.5px">小林正男</div>
<div class="t" style="left:629px;top:1053.18px;font-size:23px;color:#212529;letter-spacing:0.5px">新宿</div>
<div class="t" style="left:892px;top:1053.18px;font-size:23px;color:#212529;letter-spacing:0.5px">東京都新宿区新宿３丁目３８−１</div>
<div class="t" style="left:1419px;top:1053.18px;font-size:23px;color:#212529;letter-spacing:0.5px"><span style="font-size:23.7px;letter-spacing:0.9px">47</span>分</div>
<div class="t" style="left:1595px;top:1053.18px;font-size:23px;color:#212529;letter-spacing:0.5px">新宿</div>
<div class="a" style="left:558px;top:1041.35px;width:47px;height:45px;box-sizing:border-box;border:1px solid #6c757d;border-radius:6px"></div>
<svg class="a" style="left:571px;top:1054.35px" width="21" height="21" viewBox="0 0 512 512" preserveAspectRatio="none"><path fill="#6c757d" d="M471.6 21.7c-21.9-21.9-57.3-21.9-79.2 0L362.3 51.7l97.9 97.9 30.1-30.1c21.9-21.9 21.9-57.3 0-79.2L471.6 21.7zm-299.2 220c-6.1 6.1-10.8 13.6-13.5 21.9l-29.6 88.8c-2.9 8.6-.6 18.1 5.8 24.6s15.9 8.7 24.6 5.8l88.8-29.6c8.2-2.7 15.7-7.4 21.9-13.5L437.7 172.3 339.7 74.3 172.4 241.7zM96 64C43 64 0 107 0 160V416c0 53 43 96 96 96H352c53 0 96-43 96-96V320c0-17.7-14.3-32-32-32s-32 14.3-32 32v96c0 17.7-14.3 32-32 32H96c-17.7 0-32-14.3-32-32V160c0-17.7 14.3-32 32-32h96c17.7 0 32-14.3 32-32s-14.3-32-32-32H96z"/></svg>
<div class="a" style="left:1815px;top:1041.35px;width:46px;height:45px;box-sizing:border-box;border:1px solid #3470f0;border-radius:6px"></div>
<svg class="a" style="left:1828px;top:1054.35px" width="21" height="21" viewBox="0 0 512 512" preserveAspectRatio="none"><path fill="#3470f0" d="M471.6 21.7c-21.9-21.9-57.3-21.9-79.2 0L362.3 51.7l97.9 97.9 30.1-30.1c21.9-21.9 21.9-57.3 0-79.2L471.6 21.7zm-299.2 220c-6.1 6.1-10.8 13.6-13.5 21.9l-29.6 88.8c-2.9 8.6-.6 18.1 5.8 24.6s15.9 8.7 24.6 5.8l88.8-29.6c8.2-2.7 15.7-7.4 21.9-13.5L437.7 172.3 339.7 74.3 172.4 241.7zM96 64C43 64 0 107 0 160V416c0 53 43 96 96 96H352c53 0 96-43 96-96V320c0-17.7-14.3-32-32-32s-32 14.3-32 32v96c0 17.7-14.3 32-32 32H96c-17.7 0-32-14.3-32-32V160c0-17.7 14.3-32 32-32h96c17.7 0 32-14.3 32-32s-14.3-32-32-32H96z"/></svg>
<div class="a" style="left:1868px;top:1041.35px;width:44px;height:45px;box-sizing:border-box;border:1px solid #c9424b;border-radius:6px"></div>
<svg class="a" style="left:1881px;top:1054.35px" width="18" height="21" viewBox="0 0 448 512" preserveAspectRatio="none"><path fill="#c9424b" d="M135.2 17.7L128 32H32C14.3 32 0 46.3 0 64S14.3 96 32 96H416c17.7 0 32-14.3 32-32s-14.3-32-32-32H320l-7.2-14.3C307.4 6.8 296.3 0 284.2 0H163.8c-12.1 0-23.2 6.8-28.6 17.7zM416 128H32L53.2 467c1.6 25.3 22.6 45 47.9 45H346.9c25.3 0 46.3-19.7 47.9-45L416 128z"/></svg>
<div class="a" style="left:67px;top:1099.35px;width:2000px;height:69.67px;box-sizing:border-box;background:#f2f2f2;border-bottom:1px solid #dfe1e5"></div>
<div class="t" style="left:79.5px;top:1122.35px;font-size:25px;color:#212529;letter-spacing:0.25px;-webkit-text-stroke:0.15px">12:00</div>
<div class="t" style="left:299.5px;top:1122.85px;font-size:23px;color:#212529;letter-spacing:0.5px">加藤雅子</div>
<div class="t" style="left:629px;top:1122.85px;font-size:23px;color:#212529;letter-spacing:0.5px">千代田区カフェ</div>
<div class="t" style="left:892px;top:1122.85px;font-size:23px;color:#212529;letter-spacing:0.5px">千代田区四番町５−９</div>
<div class="t" style="left:1419px;top:1122.85px;font-size:23px;color:#212529;letter-spacing:0.5px"><span style="font-size:23.7px;letter-spacing:0.9px">30</span>分</div>
<div class="t" style="left:1595px;top:1122.85px;font-size:23px;color:#212529;letter-spacing:0.5px">千代田区カフェ</div>
<div class="a" style="left:558px;top:1111.02px;width:47px;height:45px;box-sizing:border-box;border:1px solid #6c757d;border-radius:6px"></div>
<svg class="a" style="left:571px;top:1124.02px" width="21" height="21" viewBox="0 0 512 512" preserveAspectRatio="none"><path fill="#6c757d" d="M471.6 21.7c-21.9-21.9-57.3-21.9-79.2 0L362.3 51.7l97.9 97.9 30.1-30.1c21.9-21.9 21.9-57.3 0-79.2L471.6 21.7zm-299.2 220c-6.1 6.1-10.8 13.6-13.5 21.9l-29.6 88.8c-2.9 8.6-.6 18.1 5.8 24.6s15.9 8.7 24.6 5.8l88.8-29.6c8.2-2.7 15.7-7.4 21.9-13.5L437.7 172.3 339.7 74.3 172.4 241.7zM96 64C43 64 0 107 0 160V416c0 53 43 96 96 96H352c53 0 96-43 96-96V320c0-17.7-14.3-32-32-32s-32 14.3-32 32v96c0 17.7-14.3 32-32 32H96c-17.7 0-32-14.3-32-32V160c0-17.7 14.3-32 32-32h96c17.7 0 32-14.3 32-32s-14.3-32-32-32H96z"/></svg>
<div class="a" style="left:1815px;top:1111.02px;width:46px;height:45px;box-sizing:border-box;border:1px solid #3470f0;border-radius:6px"></div>
<svg class="a" style="left:1828px;top:1124.02px" width="21" height="21" viewBox="0 0 512 512" preserveAspectRatio="none"><path fill="#3470f0" d="M471.6 21.7c-21.9-21.9-57.3-21.9-79.2 0L362.3 51.7l97.9 97.9 30.1-30.1c21.9-21.9 21.9-57.3 0-79.2L471.6 21.7zm-299.2 220c-6.1 6.1-10.8 13.6-13.5 21.9l-29.6 88.8c-2.9 8.6-.6 18.1 5.8 24.6s15.9 8.7 24.6 5.8l88.8-29.6c8.2-2.7 15.7-7.4 21.9-13.5L437.7 172.3 339.7 74.3 172.4 241.7zM96 64C43 64 0 107 0 160V416c0 53 43 96 96 96H352c53 0 96-43 96-96V320c0-17.7-14.3-32-32-32s-32 14.3-32 32v96c0 17.7-14.3 32-32 32H96c-17.7 0-32-14.3-32-32V160c0-17.7 14.3-32 32-32h96c17.7 0 32-14.3 32-32s-14.3-32-32-32H96z"/></svg>
<div class="a" style="left:1868px;top:1111.02px;width:44px;height:45px;box-sizing:border-box;border:1px solid #c9424b;border-radius:6px"></div>
<svg class="a" style="left:1881px;top:1124.02px" width="18" height="21" viewBox="0 0 448 512" preserveAspectRatio="none"><path fill="#c9424b" d="M135.2 17.7L128 32H32C14.3 32 0 46.3 0 64S14.3 96 32 96H416c17.7 0 32-14.3 32-32s-14.3-32-32-32H320l-7.2-14.3C307.4 6.8 296.3 0 284.2 0H163.8c-12.1 0-23.2 6.8-28.6 17.7zM416 128H32L53.2 467c1.6 25.3 22.6 45 47.9 45H346.9c25.3 0 46.3-19.7 47.9-45L416 128z"/></svg>
<div class="a" style="left:67px;top:1169.02px;width:2000px;height:69.67px;box-sizing:border-box;background:#fff;border-bottom:1px solid #dfe1e5"></div>
<div class="t" style="left:79.5px;top:1192.02px;font-size:25px;color:#212529;letter-spacing:0.25px;-webkit-text-stroke:0.15px">13:00</div>
<div class="t" style="left:299.5px;top:1192.52px;font-size:23px;color:#212529;letter-spacing:0.5px">井上博文</div>
<div class="t" style="left:629px;top:1192.52px;font-size:23px;color:#212529;letter-spacing:0.5px">麺屋</div>
<div class="t" style="left:892px;top:1192.52px;font-size:23px;color:#212529;letter-spacing:0.5px">東京都葛飾区東新小岩１丁目４−４</div>
<div class="t" style="left:1419px;top:1192.52px;font-size:23px;color:#212529;letter-spacing:0.5px"><span style="font-size:23.7px;letter-spacing:0.9px">39</span>分</div>
<div class="t" style="left:1595px;top:1192.52px;font-size:23px;color:#212529;letter-spacing:0.5px">麺屋</div>
<div class="a" style="left:558px;top:1180.69px;width:47px;height:45px;box-sizing:border-box;border:1px solid #6c757d;border-radius:6px"></div>
<svg class="a" style="left:571px;top:1193.69px" width="21" height="21" viewBox="0 0 512 512" preserveAspectRatio="none"><path fill="#6c757d" d="M471.6 21.7c-21.9-21.9-57.3-21.9-79.2 0L362.3 51.7l97.9 97.9 30.1-30.1c21.9-21.9 21.9-57.3 0-79.2L471.6 21.7zm-299.2 220c-6.1 6.1-10.8 13.6-13.5 21.9l-29.6 88.8c-2.9 8.6-.6 18.1 5.8 24.6s15.9 8.7 24.6 5.8l88.8-29.6c8.2-2.7 15.7-7.4 21.9-13.5L437.7 172.3 339.7 74.3 172.4 241.7zM96 64C43 64 0 107 0 160V416c0 53 43 96 96 96H352c53 0 96-43 96-96V320c0-17.7-14.3-32-32-32s-32 14.3-32 32v96c0 17.7-14.3 32-32 32H96c-17.7 0-32-14.3-32-32V160c0-17.7 14.3-32 32-32h96c17.7 0 32-14.3 32-32s-14.3-32-32-32H96z"/></svg>
<div class="a" style="left:1815px;top:1180.69px;width:46px;height:45px;box-sizing:border-box;border:1px solid #3470f0;border-radius:6px"></div>
<svg class="a" style="left:1828px;top:1193.69px" width="21" height="21" viewBox="0 0 512 512" preserveAspectRatio="none"><path fill="#3470f0" d="M471.6 21.7c-21.9-21.9-57.3-21.9-79.2 0L362.3 51.7l97.9 97.9 30.1-30.1c21.9-21.9 21.9-57.3 0-79.2L471.6 21.7zm-299.2 220c-6.1 6.1-10.8 13.6-13.5 21.9l-29.6 88.8c-2.9 8.6-.6 18.1 5.8 24.6s15.9 8.7 24.6 5.8l88.8-29.6c8.2-2.7 15.7-7.4 21.9-13.5L437.7 172.3 339.7 74.3 172.4 241.7zM96 64C43 64 0 107 0 160V416c0 53 43 96 96 96H352c53 0 96-43 96-96V320c0-17.7-14.3-32-32-32s-32 14.3-32 32v96c0 17.7-14.3 32-32 32H96c-17.7 0-32-14.3-32-32V160c0-17.7 14.3-32 32-32h96c17.7 0 32-14.3 32-32s-14.3-32-32-32H96z"/></svg>
<div class="a" style="left:1868px;top:1180.69px;width:44px;height:45px;box-sizing:border-box;border:1px solid #c9424b;border-radius:6px"></div>
<svg class="a" style="left:1881px;top:1193.69px" width="18" height="21" viewBox="0 0 448 512" preserveAspectRatio="none"><path fill="#c9424b" d="M135.2 17.7L128 32H32C14.3 32 0 46.3 0 64S14.3 96 32 96H416c17.7 0 32-14.3 32-32s-14.3-32-32-32H320l-7.2-14.3C307.4 6.8 296.3 0 284.2 0H163.8c-12.1 0-23.2 6.8-28.6 17.7zM416 128H32L53.2 467c1.6 25.3 22.6 45 47.9 45H346.9c25.3 0 46.3-19.7 47.9-45L416 128z"/></svg>
<div class="a" style="left:67px;top:1238.69px;width:2000px;height:69.67px;box-sizing:border-box;background:#f2f2f2;border-bottom:1px solid #dfe1e5"></div>
<div class="t" style="left:79.5px;top:1261.69px;font-size:25px;color:#212529;letter-spacing:0.25px;-webkit-text-stroke:0.15px">13:00</div>
<div class="t" style="left:299.5px;top:1262.19px;font-size:23px;color:#212529;letter-spacing:0.5px">伊藤健太</div>
<div class="t" style="left:629px;top:1262.19px;font-size:23px;color:#212529;letter-spacing:0.5px">銭湯</div>
<div class="t" style="left:892px;top:1262.19px;font-size:23px;color:#212529;letter-spacing:0.5px">神奈川県川崎市中原区苅宿３６−３２</div>
<div class="t" style="left:1419px;top:1262.19px;font-size:23px;color:#212529;letter-spacing:0.5px"><span style="font-size:23.7px;letter-spacing:0.9px">52</span>分</div>
<div class="t" style="left:1595px;top:1262.19px;font-size:23px;color:#212529;letter-spacing:0.5px">銭湯</div>
<div class="a" style="left:558px;top:1250.36px;width:47px;height:45px;box-sizing:border-box;border:1px solid #6c757d;border-radius:6px"></div>
<svg class="a" style="left:571px;top:1263.36px" width="21" height="21" viewBox="0 0 512 512" preserveAspectRatio="none"><path fill="#6c757d" d="M471.6 21.7c-21.9-21.9-57.3-21.9-79.2 0L362.3 51.7l97.9 97.9 30.1-30.1c21.9-21.9 21.9-57.3 0-79.2L471.6 21.7zm-299.2 220c-6.1 6.1-10.8 13.6-13.5 21.9l-29.6 88.8c-2.9 8.6-.6 18.1 5.8 24.6s15.9 8.7 24.6 5.8l88.8-29.6c8.2-2.7 15.7-7.4 21.9-13.5L437.7 172.3 339.7 74.3 172.4 241.7zM96 64C43 64 0 107 0 160V416c0 53 43 96 96 96H352c53 0 96-43 96-96V320c0-17.7-14.3-32-32-32s-32 14.3-32 32v96c0 17.7-14.3 32-32 32H96c-17.7 0-32-14.3-32-32V160c0-17.7 14.3-32 32-32h96c17.7 0 32-14.3 32-32s-14.3-32-32-32H96z"/></svg>
<div class="a" style="left:1815px;top:1250.36px;width:46px;height:45px;box-sizing:border-box;border:1px solid #3470f0;border-radius:6px"></div>
<svg class="a" style="left:1828px;top:1263.36px" width="21" height="21" viewBox="0 0 512 512" preserveAspectRatio="none"><path fill="#3470f0" d="M471.6 21.7c-21.9-21.9-57.3-21.9-79.2 0L362.3 51.7l97.9 97.9 30.1-30.1c21.9-21.9 21.9-57.3 0-79.2L471.6 21.7zm-299.2 220c-6.1 6.1-10.8 13.6-13.5 21.9l-29.6 88.8c-2.9 8.6-.6 18.1 5.8 24.6s15.9 8.7 24.6 5.8l88.8-29.6c8.2-2.7 15.7-7.4 21.9-13.5L437.7 172.3 339.7 74.3 172.4 241.7zM96 64C43 64 0 107 0 160V416c0 53 43 96 96 96H352c53 0 96-43 96-96V320c0-17.7-14.3-32-32-32s-32 14.3-32 32v96c0 17.7-14.3 32-32 32H96c-17.7 0-32-14.3-32-32V160c0-17.7 14.3-32 32-32h96c17.7 0 32-14.3 32-32s-14.3-32-32-32H96z"/></svg>
<div class="a" style="left:1868px;top:1250.36px;width:44px;height:45px;box-sizing:border-box;border:1px solid #c9424b;border-radius:6px"></div>
<svg class="a" style="left:1881px;top:1263.36px" width="18" height="21" viewBox="0 0 448 512" preserveAspectRatio="none"><path fill="#c9424b" d="M135.2 17.7L128 32H32C14.3 32 0 46.3 0 64S14.3 96 32 96H416c17.7 0 32-14.3 32-32s-14.3-32-32-32H320l-7.2-14.3C307.4 6.8 296.3 0 284.2 0H163.8c-12.1 0-23.2 6.8-28.6 17.7zM416 128H32L53.2 467c1.6 25.3 22.6 45 47.9 45H346.9c25.3 0 46.3-19.7 47.9-45L416 128z"/></svg>
<div class="a" style="left:67px;top:1308.36px;width:2000px;height:69.67px;box-sizing:border-box;background:#fff;border-bottom:1px solid #dfe1e5"></div>
<div class="t" style="left:79.5px;top:1331.36px;font-size:25px;color:#212529;letter-spacing:0.25px;-webkit-text-stroke:0.15px">13:00</div>
<div class="t" style="left:299.5px;top:1331.86px;font-size:23px;color:#212529;letter-spacing:0.5px">小林正男</div>
<div class="t" style="left:629px;top:1331.86px;font-size:23px;color:#212529;letter-spacing:0.5px">天ぷら割烹</div>
<div class="t" style="left:892px;top:1331.86px;font-size:23px;color:#212529;letter-spacing:0.5px">東京都大田区大森北１丁目２６−２</div>
<div class="t" style="left:1419px;top:1331.86px;font-size:23px;color:#212529;letter-spacing:0.5px"><span style="font-size:23.7px;letter-spacing:0.9px">82</span>分</div>
<div class="t" style="left:1595px;top:1331.86px;font-size:23px;color:#212529;letter-spacing:0.5px">天ぷら割烹</div>
<div class="a" style="left:558px;top:1320.03px;width:47px;height:45px;box-sizing:border-box;border:1px solid #6c757d;border-radius:6px"></div>
<svg class="a" style="left:571px;top:1333.03px" width="21" height="21" viewBox="0 0 512 512" preserveAspectRatio="none"><path fill="#6c757d" d="M471.6 21.7c-21.9-21.9-57.3-21.9-79.2 0L362.3 51.7l97.9 97.9 30.1-30.1c21.9-21.9 21.9-57.3 0-79.2L471.6 21.7zm-299.2 220c-6.1 6.1-10.8 13.6-13.5 21.9l-29.6 88.8c-2.9 8.6-.6 18.1 5.8 24.6s15.9 8.7 24.6 5.8l88.8-29.6c8.2-2.7 15.7-7.4 21.9-13.5L437.7 172.3 339.7 74.3 172.4 241.7zM96 64C43 64 0 107 0 160V416c0 53 43 96 96 96H352c53 0 96-43 96-96V320c0-17.7-14.3-32-32-32s-32 14.3-32 32v96c0 17.7-14.3 32-32 32H96c-17.7 0-32-14.3-32-32V160c0-17.7 14.3-32 32-32h96c17.7 0 32-14.3 32-32s-14.3-32-32-32H96z"/></svg>
<div class="a" style="left:1815px;top:1320.03px;width:46px;height:45px;box-sizing:border-box;border:1px solid #3470f0;border-radius:6px"></div>
<svg class="a" style="left:1828px;top:1333.03px" width="21" height="21" viewBox="0 0 512 512" preserveAspectRatio="none"><path fill="#3470f0" d="M471.6 21.7c-21.9-21.9-57.3-21.9-79.2 0L362.3 51.7l97.9 97.9 30.1-30.1c21.9-21.9 21.9-57.3 0-79.2L471.6 21.7zm-299.2 220c-6.1 6.1-10.8 13.6-13.5 21.9l-29.6 88.8c-2.9 8.6-.6 18.1 5.8 24.6s15.9 8.7 24.6 5.8l88.8-29.6c8.2-2.7 15.7-7.4 21.9-13.5L437.7 172.3 339.7 74.3 172.4 241.7zM96 64C43 64 0 107 0 160V416c0 53 43 96 96 96H352c53 0 96-43 96-96V320c0-17.7-14.3-32-32-32s-32 14.3-32 32v96c0 17.7-14.3 32-32 32H96c-17.7 0-32-14.3-32-32V160c0-17.7 14.3-32 32-32h96c17.7 0 32-14.3 32-32s-14.3-32-32-32H96z"/></svg>
<div class="a" style="left:1868px;top:1320.03px;width:44px;height:45px;box-sizing:border-box;border:1px solid #c9424b;border-radius:6px"></div>
<svg class="a" style="left:1881px;top:1333.03px" width="18" height="21" viewBox="0 0 448 512" preserveAspectRatio="none"><path fill="#c9424b" d="M135.2 17.7L128 32H32C14.3 32 0 46.3 0 64S14.3 96 32 96H416c17.7 0 32-14.3 32-32s-14.3-32-32-32H320l-7.2-14.3C307.4 6.8 296.3 0 284.2 0H163.8c-12.1 0-23.2 6.8-28.6 17.7zM416 128H32L53.2 467c1.6 25.3 22.6 45 47.9 45H346.9c25.3 0 46.3-19.7 47.9-45L416 128z"/></svg>
<div class="a" style="left:67px;top:679px;width:2000px;height:3px;box-sizing:border-box;background:#212529"></div>
</body>
</html>
